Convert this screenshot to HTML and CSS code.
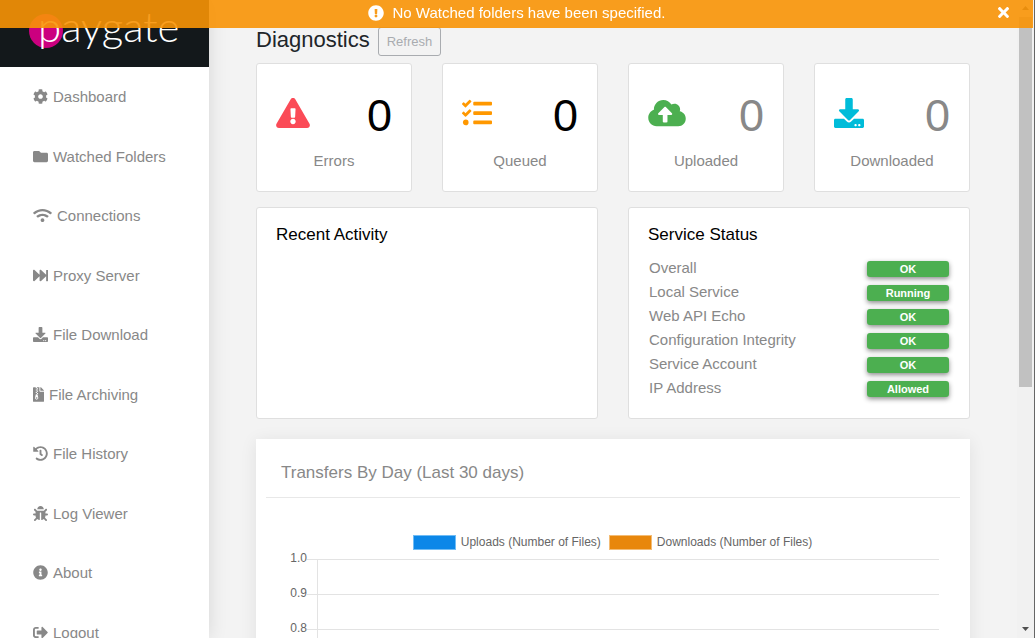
FILE: index.html
```html
<!DOCTYPE html>
<html lang="en">
<head>
<meta charset="utf-8">
<title>Paygate - Diagnostics</title>
<link rel="stylesheet" href="styles.css">
</head>
<body>
<svg class="sprite" aria-hidden="true">
  <symbol id="download" viewBox="0 0 512 512"><path d="M216 0h80c13.300 0 24 10.700 24 24v168h87.700c17.800 0 26.700 21.500 14.100 34.100L269.700 378.300c-7.500 7.500-19.800 7.500-27.300 0L90.100 226.100c-12.600-12.600-3.700-34.100 14.100-34.100H192V24c0-13.300 10.700-24 24-24zm296 376v112c0 13.300-10.700 24-24 24H24c-13.300 0-24-10.700-24-24V376c0-13.300 10.700-24 24-24h146.700l49 49c20.100 20.100 52.500 20.100 72.600 0l49-49H488c13.300 0 24 10.700 24 24zm-124 88c0-11-9-20-20-20s-20 9-20 20 9 20 20 20 20-9 20-20zm64 0c0-11-9-20-20-20s-20 9-20 20 9 20 20 20 20-9 20-20z"/></symbol>
</svg>

<div class="alert" role="alert">
  <svg class="alert-icon" viewBox="0 0 512 512"><path d="M504 256c0 137-111 248-248 248S8 393 8 256 119 8 256 8s248 111 248 248zm-248 50c-25.400 0-46 20.600-46 46s20.600 46 46 46 46-20.600 46-46-20.600-46-46-46zm-43.700-165.300l7.400 136c.4 6.400 5.600 11.300 12 11.300h48.600c6.400 0 11.600-5 12-11.300l7.400-136c.4-6.900-5.100-12.700-12-12.700h-63.400c-6.900 0-12.400 5.800-12 12.700z"/></svg>
  <span>No Watched folders have been specified.</span>
  <button class="alert-close" type="button" aria-label="Close"><svg viewBox="0 0 352 352"><path d="M243 176l100-100c12-12 12-32 0-44L321 9c-12-12-32-12-44 0L176 109 76 9C64-3 44-3 32 9L9 32c-12 12-12 32 0 44l100 100L9 276c-12 12-12 32 0 44l23 23c12 12 32 12 44 0l100-100 101 100c12 12 32 12 44 0l22-23c12-12 12-32 0-44z"/></svg></button>
</div>

<div class="app">
  <aside class="sidebar">
    <div class="brand">
      <span class="brand-dot"></span>
      <span class="brand-name">paygate</span>
    </div>
    <nav class="nav">
      <a href="#"><svg viewBox="0 0 512 512"><path d="M487.400 315.700l-42.600-24.600c4.300-23.200 4.300-47 0-70.200l42.600-24.600c4.900-2.800 7.100-8.600 5.500-14-11.100-35.600-30-67.800-54.700-94.600-3.800-4.100-10-5.100-14.800-2.300L380.800 110c-17.900-15.400-38.500-27.300-60.800-35.100V25.800c0-5.600-3.900-10.500-9.400-11.700-36.700-8.200-74.300-7.800-109.200 0-5.500 1.200-9.400 6.100-9.400 11.700V75c-22.200 7.900-42.800 19.800-60.800 35.100L88.700 85.500c-4.900-2.800-11-1.900-14.800 2.300-24.700 26.700-43.600 58.900-54.700 94.600-1.700 5.400.6 11.200 5.500 14L67.300 221c-4.300 23.200-4.300 47 0 70.200l-42.600 24.600c-4.900 2.800-7.100 8.600-5.500 14 11.100 35.600 30 67.800 54.700 94.600 3.800 4.100 10 5.100 14.800 2.300l42.600-24.600c17.900 15.400 38.500 27.300 60.800 35.100v49.200c0 5.600 3.900 10.500 9.400 11.700 36.700 8.200 74.300 7.800 109.200 0 5.500-1.200 9.400-6.100 9.400-11.700v-49.200c22.200-7.900 42.800-19.800 60.800-35.100l42.600 24.600c4.900 2.800 11 1.900 14.800-2.300 24.700-26.700 43.600-58.900 54.700-94.600 1.500-5.500-.7-11.300-5.600-14.100zM256 336c-44.100 0-80-35.900-80-80s35.900-80 80-80 80 35.900 80 80-35.900 80-80 80z"/></svg>Dashboard</a>
      <a href="#"><svg viewBox="0 0 512 512"><path d="M464 128H272l-64-64H48C21.500 64 0 85.500 0 112v288c0 26.500 21.500 48 48 48h416c26.500 0 48-21.500 48-48V176c0-26.500-21.500-48-48-48z"/></svg>Watched Folders</a>
      <a href="#"><svg class="wide" viewBox="0 0 640 512"><path d="M634.900 154.900C457.700-9 182.200-8.900 5.100 154.900c-6.700 6.200-6.800 16.600-.4 23l34.200 34c6.100 6.100 16 6.200 22.400.4 145.900-133.700 371.300-133.700 517.300 0 6.400 5.900 16.300 5.700 22.400-.4l34.200-34c6.500-6.400 6.300-16.800-.3-23zM320 352c-35.300 0-64 28.700-64 64s28.700 64 64 64 64-28.700 64-64-28.700-64-64-64zm202.700-83.600c-115.300-101.900-290.200-101.800-405.300 0-6.900 6.100-7.100 16.700-.6 23.200l34.400 34c6 5.900 15.700 6.300 22.100.8 84-72.600 209.700-72.400 293.500 0 6.400 5.500 16.100 5.200 22.100-.8l34.400-34c6.500-6.500 6.300-17.100-.6-23.200z"/></svg>Connections</a>
      <a href="#"><svg viewBox="0 0 512 512"><path d="M512 76v360c0 6.600-5.400 12-12 12h-40c-6.600 0-12-5.400-12-12V284.100L276.500 440.600c-20.600 17.200-52.500 2.800-52.500-24.600V284.100L52.500 440.600C31.900 457.800 0 443.400 0 416V96c0-27.400 31.900-41.700 52.500-24.600L224 226.800V96c0-27.400 31.900-41.700 52.500-24.600L448 226.800V76c0-6.600 5.400-12 12-12h40c6.600 0 12 5.400 12 12z"/></svg>Proxy Server</a>
      <a href="#"><svg><use href="#download"/></svg>File Download</a>
      <a href="#"><svg class="narrow" viewBox="0 0 384 512"><path fill-rule="evenodd" d="M224 136V0H24C11 0 0 11 0 24v464c0 13 11 24 24 24h336c13 0 24-11 24-24V160H248c-13 0-24-11-24-24zM96 0h40v40H96zm40 40h40v40h-40zM96 80h40v40H96zm40 40h40v40h-40zM96 160h40v40H96zm40 40h40v40h-40zM100 250h56l26 106c10 46-17 80-54 80s-64-34-54-80zm28 98c-18 0-32 12-32 27s14 27 32 27 32-12 32-27-14-27-32-27zM377 105L279 7c-5-5-11-7-17-7h-6v128h128v-6c0-6-3-12-7-17z"/></svg>File Archiving</a>
      <a href="#"><svg viewBox="0 0 512 512"><path d="M504 255.500c.3 136.600-111.200 248.400-247.800 248.500-59 0-113.200-20.500-155.800-54.900-11.100-8.900-11.900-25.500-1.800-35.600l11.300-11.300c8.600-8.600 22.400-9.600 31.900-2C173.100 425.100 212.800 440 256 440c101.700 0 184-82.300 184-184 0-101.700-82.300-184-184-184-48.800 0-93.100 19-126.100 49.900l50.800 50.800c10.100 10.100 2.900 27.300-11.300 27.300H24c-8.800 0-16-7.200-16-16V38.600c0-14.300 17.200-21.400 27.300-11.300l49.400 49.400C129.200 34.100 189.600 8 256 8c136.800 0 247.700 110.800 248 247.500zm-180.900 78.800l9.800-12.600c8.100-10.500 6.300-25.500-4.200-33.700L288 256.300V152c0-13.300-10.700-24-24-24h-16c-13.300 0-24 10.700-24 24v135.700l65.400 50.900c10.500 8.100 25.500 6.300 33.700-4.300z"/></svg>File History</a>
      <a href="#"><svg viewBox="0 0 512 512"><path d="M512 289c-.5 17.400-15.200 31-32.600 31H424v16c0 21.900-4.900 42.600-13.700 61.100l60.300 60.300c12.500 12.500 12.500 32.800 0 45.300s-32.800 12.500-45.300 0l-54.700-54.700C345.900 467.900 314.400 480 280 480V236c0-6.600-5.400-12-12-12h-24c-6.600 0-12 5.400-12 12v244c-34.400 0-65.900-12.100-90.600-32.300l-54.700 54.700c-12.500 12.500-32.800 12.500-45.300 0s-12.500-32.800 0-45.300l60.300-60.300C92.900 378.600 88 357.900 88 336v-16H32.600C15.200 320 .5 306.400 0 289c-.5-18.100 14-33 32-33h56v-58.700l-46.600-46.600c-12.500-12.500-12.500-32.800 0-45.300s32.800-12.500 45.300 0L141.300 160h229.500l54.600-54.600c12.500-12.500 32.800-12.500 45.300 0s12.500 32.800 0 45.300L424 197.300V256h56c18 0 32.500 14.900 32 33zM257 0c-61.900 0-112 50.100-112 112h224C369 50.100 318.900 0 257 0z"/></svg>Log Viewer</a>
      <a href="#"><svg viewBox="0 0 512 512"><path d="M256 8C119 8 8 119 8 256s111 248 248 248 248-111 248-248S393 8 256 8zm0 110c23.200 0 42 18.800 42 42s-18.800 42-42 42-42-18.800-42-42 18.800-42 42-42zm56 254c0 6.600-5.400 12-12 12h-88c-6.600 0-12-5.400-12-12v-24c0-6.600 5.400-12 12-12h12v-64h-12c-6.600 0-12-5.400-12-12v-24c0-6.600 5.400-12 12-12h64c6.600 0 12 5.400 12 12v100h12c6.600 0 12 5.400 12 12v24z"/></svg>About</a>
      <a href="#"><svg viewBox="0 0 512 512"><path d="M497 273L329 441c-15 15-41 4.500-41-17v-96H152c-13.300 0-24-10.700-24-24v-96c0-13.300 10.700-24 24-24h136V88c0-21.400 25.900-32 41-17l168 168c9.300 9.400 9.300 24.600 0 34zM192 436v-40c0-6.600-5.400-12-12-12H96c-17.700 0-32-14.300-32-32V160c0-17.700 14.300-32 32-32h84c6.600 0 12-5.400 12-12V76c0-6.600-5.400-12-12-12H96c-53 0-96 43-96 96v192c0 53 43 96 96 96h84c6.600 0 12-5.400 12-12z"/></svg>Logout</a>
    </nav>
  </aside>

  <main class="content">
    <header class="page-head">
      <h1>Diagnostics</h1>
      <button class="refresh" type="button">Refresh</button>
    </header>

    <section class="stats">
      <article class="card stat">
        <div class="stat-top strong">
          <svg class="errors" viewBox="0 0 576 512"><path d="M569.500 440c18.500 32-4.700 72-41.600 72H48.100c-36.900 0-60-40.100-41.600-72L246.400 24c18.500-32 64.700-32 83.200 0l239.900 416zM288 354c-25.400 0-46 20.600-46 46s20.600 46 46 46 46-20.600 46-46-20.600-46-46-46zm-43.700-165.300l7.400 136c.4 6.400 5.600 11.300 12 11.300h48.600c6.400 0 11.600-5 12-11.300l7.400-136c.4-6.900-5.100-12.700-12-12.700h-63.400c-6.900 0-12.400 5.800-12 12.700z"/></svg>
          <span>0</span>
        </div>
        <p>Errors</p>
      </article>
      <article class="card stat">
        <div class="stat-top strong">
          <svg class="queued" viewBox="0 0 512 512"><path d="M139.600 35.500a12 12 0 0 0-17 0L58.900 98.800l-22.700-22.100a12 12 0 0 0-17 0L3.500 92.400a12 12 0 0 0 0 17l47.600 47.400a12.800 12.800 0 0 0 17.600 0l15.600-15.600L156.500 69a12.100 12.100 0 0 0 .1-17zm0 159.200a12 12 0 0 0-17 0l-63.700 63.700-22.700-22.100a12 12 0 0 0-17 0L3.500 252a12 12 0 0 0 0 17L51 316.500a12.800 12.800 0 0 0 17.600 0l15.700-15.700 72.200-72.200a12 12 0 0 0 .1-16.900zM64 368c-26.500 0-48.600 21.500-48.600 48s22.100 48 48.600 48a48 48 0 0 0 0-96zm432 16H208a16 16 0 0 0-16 16v32a16 16 0 0 0 16 16h288a16 16 0 0 0 16-16v-32a16 16 0 0 0-16-16zm0-320H208a16 16 0 0 0-16 16v32a16 16 0 0 0 16 16h288a16 16 0 0 0 16-16V80a16 16 0 0 0-16-16zm0 160H208a16 16 0 0 0-16 16v32a16 16 0 0 0 16 16h288a16 16 0 0 0 16-16v-32a16 16 0 0 0-16-16z"/></svg>
          <span>0</span>
        </div>
        <p>Queued</p>
      </article>
      <article class="card stat">
        <div class="stat-top">
          <svg class="uploaded" viewBox="0 0 640 512"><path d="M537.600 226.600c4.100-10.700 6.400-22.400 6.400-34.600 0-53-43-96-96-96-19.700 0-38.100 6-53.300 16.200C367 64.200 315.300 32 256 32c-88.400 0-160 71.600-160 160 0 2.700.1 5.400.2 8.100C40.200 219.800 0 273.200 0 336c0 79.500 64.500 144 144 144h368c70.700 0 128-57.300 128-128 0-61.900-44-113.600-102.400-125.400zM393.400 288H328v112c0 8.800-7.200 16-16 16h-48c-8.800 0-16-7.200-16-16V288h-65.400c-14.300 0-21.400-17.200-11.300-27.300l105.400-105.400c6.200-6.200 16.400-6.200 22.600 0l105.400 105.400c10.100 10.100 2.900 27.300-11.300 27.300z"/></svg>
          <span>0</span>
        </div>
        <p>Uploaded</p>
      </article>
      <article class="card stat">
        <div class="stat-top">
          <svg class="downloaded"><use href="#download"/></svg>
          <span>0</span>
        </div>
        <p>Downloaded</p>
      </article>
    </section>

    <section class="panels">
      <article class="card panel">
        <h2>Recent Activity</h2>
      </article>
      <article class="card panel">
        <h2>Service Status</h2>
        <dl class="status">
          <dt>Overall</dt><dd>OK</dd>
          <dt>Local Service</dt><dd>Running</dd>
          <dt>Web API Echo</dt><dd>OK</dd>
          <dt>Configuration Integrity</dt><dd>OK</dd>
          <dt>Service Account</dt><dd>OK</dd>
          <dt>IP Address</dt><dd>Allowed</dd>
        </dl>
      </article>
    </section>

    <section class="chart-card">
      <h2>Transfers By Day (Last 30 days)</h2>
      <div class="legend">
        <span class="swatch uploads"></span><span>Uploads (Number of Files)</span>
        <span class="swatch downloads"></span><span>Downloads (Number of Files)</span>
      </div>
      <div class="plot">
        <div class="row"><span>1.0</span><i></i></div>
        <div class="row"><span>0.9</span><i></i></div>
        <div class="row"><span>0.8</span><i></i></div>
      </div>
    </section>
  </main>

  <div class="scrollbar" aria-hidden="true">
    <svg viewBox="0 0 17 17"><path d="M5 10h7L8.500 6z"/></svg>
    <div class="thumb"></div>
    <svg class="down" viewBox="0 0 17 17"><path d="M5 6h7l-3.500 4z"/></svg>
  </div>
</div>
</body>
</html>
```
FILE: styles.css
```css
* { box-sizing: border-box; }

body {
  margin: 0;
  height: 100vh;
  overflow: hidden;
  background: #f3f3f3;
  color: #888;
  font: 15px/1.5 "Liberation Sans", Arial, sans-serif;
}

h1, h2, p, dl, dd { margin: 0; font-weight: 400; }
svg { fill: currentColor; flex: none; }
.sprite { position: absolute; width: 0; height: 0; }

/* Notification bar, laid over the page */
.alert {
  position: fixed;
  z-index: 10;
  top: 0;
  left: 0;
  right: 2px;
  height: 28px;
  padding-bottom: 2px;
  display: flex;
  align-items: center;
  justify-content: center;
  gap: 9px;
  background: rgba(248, 148, 6, .9);
  color: #fff;
}
.alert-icon { width: 16px; height: 16px; }
.alert-close {
  position: absolute;
  right: 24px;
  top: 7px;
  padding: 0;
  border: 0;
  background: none;
  color: #fff;
  line-height: 0;
}
.alert-close svg { width: 11px; height: 11px; }

.app {
  display: grid;
  grid-template-columns: 209px 1fr 17px;
  height: 100vh;
  overflow: hidden;
  border-right: 1px solid #666;
}

/* Sidebar */
.sidebar {
  z-index: 1;
  height: 100vh;
  background: #fff;
  box-shadow: 0 0 18px rgba(0, 0, 0, .12);
  overflow: hidden;
}
.brand {
  position: relative;
  height: 67px;
  padding-left: 38px;
  background: #13181b;
  color: #fff;
}
.brand-dot {
  position: absolute;
  left: 29px;
  top: 14px;
  width: 34px;
  height: 34px;
  border-radius: 50%;
  background: #cb007f;
}
.brand-name {
  position: relative;
  font: 300 42px/52px Lato, sans-serif;
}
.nav a {
  display: flex;
  align-items: center;
  gap: 5px;
  padding: 19px 20px 18px 33px;
  color: inherit;
  text-decoration: none;
}
.nav svg { width: 15px; height: 15px; margin-bottom: 1px; }
.nav .wide { width: 19px; }
.nav .narrow { width: 11px; }

/* Page */
.content {
  min-width: 0;
  padding: 24px 47px 0;
  overflow: hidden;
}
.page-head {
  display: flex;
  align-items: center;
  gap: 8px;
  height: 32px;
  margin-bottom: 7px;
}
.page-head h1 {
  color: #212529;
  font-size: 22px;
  line-height: 30px;
}
.refresh {
  align-self: flex-end;
  height: 29px;
  padding: 0 8px;
  border: 1px solid #a9acb0;
  border-radius: 3px;
  background: transparent;
  color: #a9acb0;
  font: 13px "Liberation Sans", Arial, sans-serif;
}

.card {
  background: #fff;
  border: 1px solid #dfdfdf;
  border-radius: 3px;
}
.stats {
  display: grid;
  grid-template-columns: repeat(4, 1fr);
  gap: 30px;
  margin-bottom: 15px;
}
.stat { padding: 19px 19px 18px; }
.stat-top {
  display: flex;
  align-items: center;
  justify-content: space-between;
  height: 66px;
  font-size: 45px;
  line-height: 66px;
}
.stat-top svg { width: 30px; height: 30px; margin-bottom: 6px; }
.stat-top .errors { width: 34px; color: #fb4b57; }
.stat-top .queued { color: #ff9800; }
.stat-top .uploaded { width: 38px; color: #4caf50; }
.stat-top .downloaded { color: #00bcd9; }
.strong span { color: #000; }
.stat p { text-align: center; line-height: 24px; }

.panels {
  display: grid;
  grid-template-columns: 1fr 1fr;
  gap: 30px;
  margin-bottom: 20px;
}
.panel { padding: 14px 19px 18px; min-height: 212px; }
.panel h2 {
  color: #000;
  font-size: 17px;
  line-height: 26px;
  margin-bottom: 8px;
}
.status {
  display: grid;
  grid-template-columns: 1fr 82px;
  align-items: center;
  padding: 0 1px;
}
.status dt { line-height: 24px; }
.status dd {
  border-radius: 3px;
  background: #4caf50;
  box-shadow: 0 2px 5px rgba(0, 0, 0, .45);
  color: #fff;
  font-size: 11px;
  font-weight: 700;
  line-height: 16px;
  margin-top: 2px;
  text-align: center;
}

/* Chart */
.chart-card {
  padding: 10px 10px 0;
  background: #fff;
  box-shadow: 0 2px 16px rgba(0, 0, 0, .08);
}
.chart-card h2 {
  padding: 0 15px;
  border-bottom: 1px solid #e8e8e8;
  font-size: 17px;
  line-height: 48px;
}
.legend {
  display: flex;
  align-items: center;
  justify-content: center;
  gap: 5px;
  margin: 37px 0 9px;
  padding-right: 1px;
  color: #666;
  font-size: 12px;
  line-height: 15px;
}
.swatch { width: 43px; height: 15px; border: 1px solid; }
.uploads { background: #0c87e8; border-color: #70bcf5; }
.downloads { margin-left: 3px; background: #e8870c; border-color: #f3bc75; }
.plot { padding: 0 21px; }
.row {
  display: grid;
  grid-template-columns: 20px 10px 1fr;
  height: 35px;
  color: #666;
  font-size: 12px;
  line-height: 14px;
}
.row span { grid-area: 1 / 1; margin-top: -8px; text-align: right; }
.row::before {
  content: "";
  grid-area: 1 / 2;
  border-top: 1px solid #e3e3e3;
}
.row i {
  border-top: 1px solid #e3e3e3;
  border-left: 1px solid #e3e3e3;
}

/* Scroll track */
.scrollbar {
  display: flex;
  flex-direction: column;
  background: #f1f1f1;
  color: #505050;
}
.scrollbar svg { width: 17px; height: 17px; }
.thumb { height: 58%; margin: 0 2px; background: #c1c1c1; }
.scrollbar .down { margin-top: auto; }
```
